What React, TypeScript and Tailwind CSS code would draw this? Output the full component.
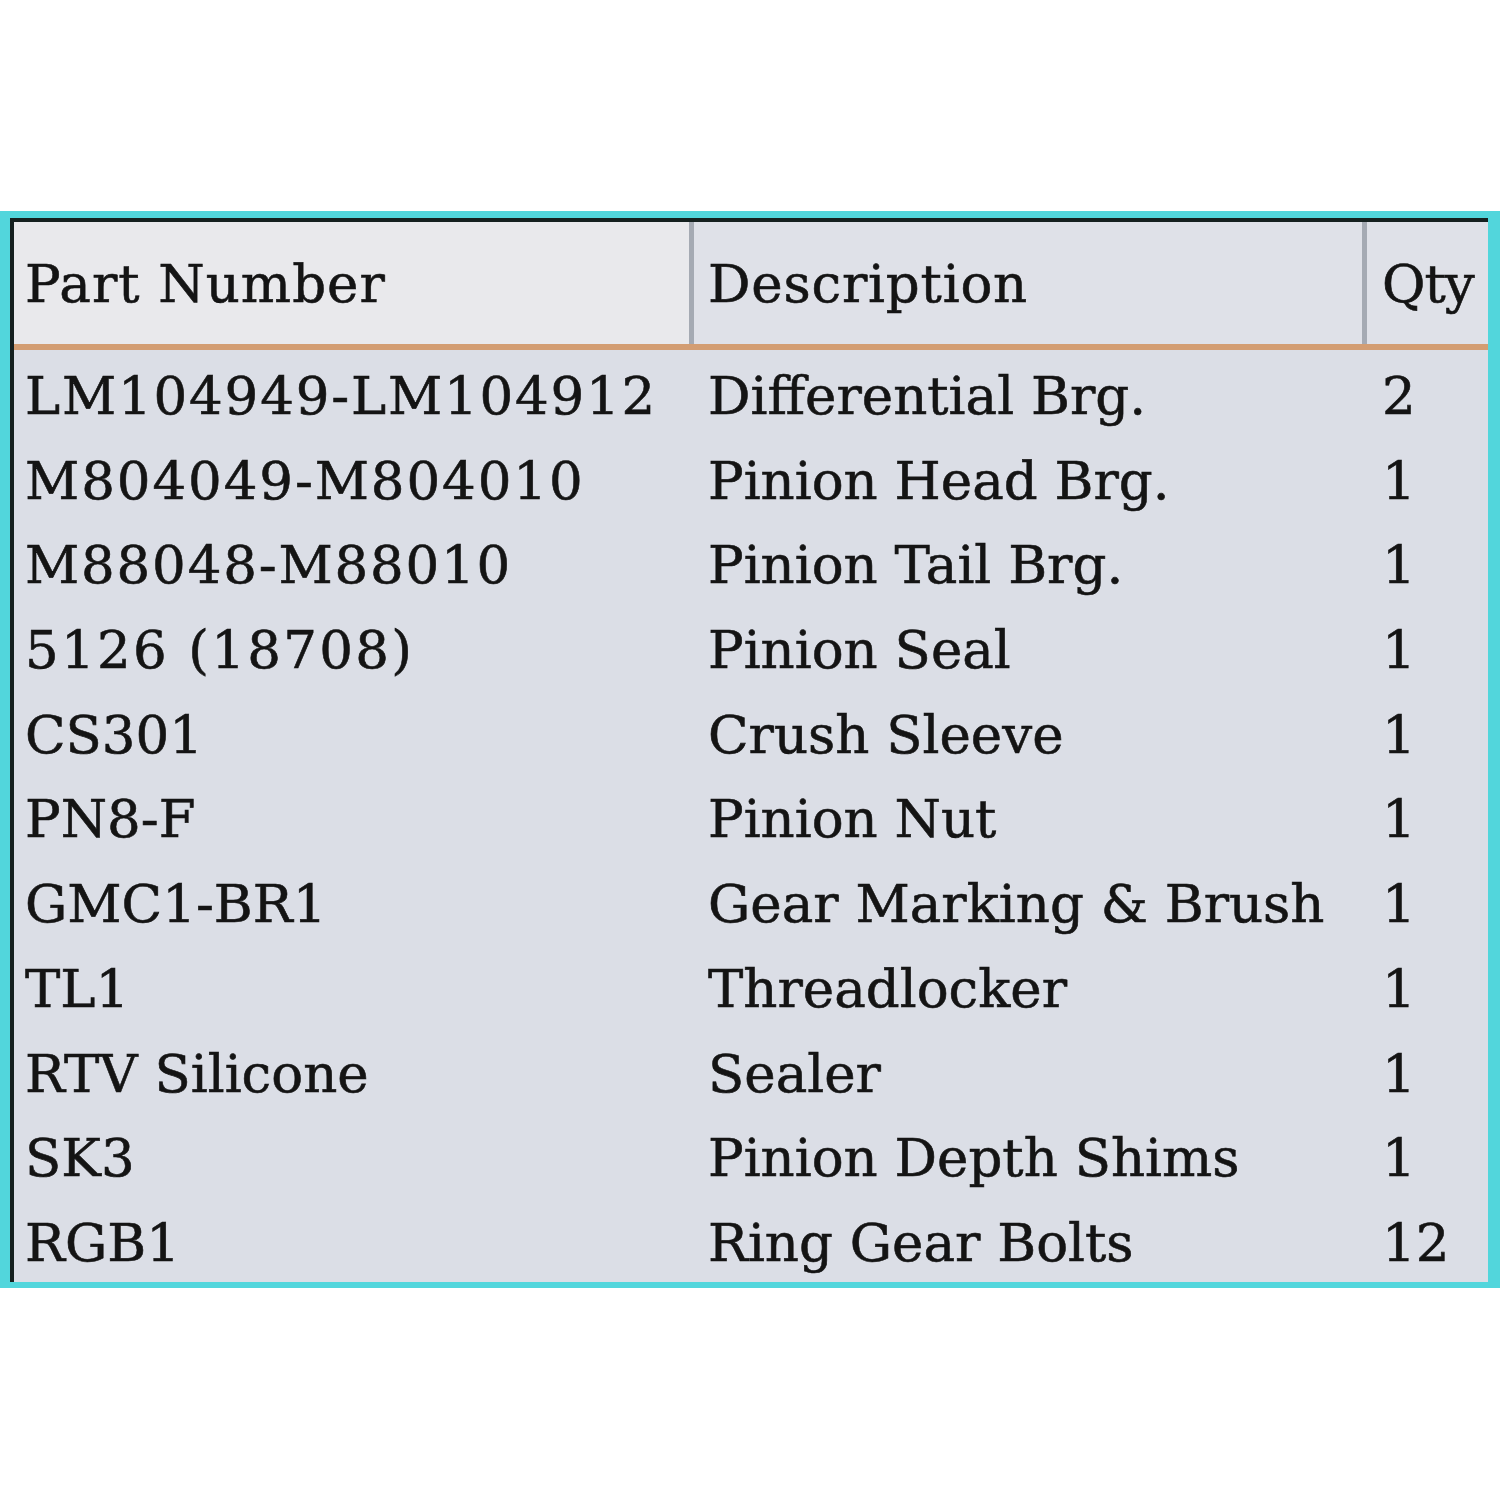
const rows: [string, string, string, string][] = [
  ["LM104949-LM104912", "Differential Brg.", "2", "tracking-[1.8px]"],
  ["M804049-M804010", "Pinion Head Brg.", "1", "tracking-[1.9px]"],
  ["M88048-M88010", "Pinion Tail Brg.", "1", "tracking-[1.8px]"],
  ["5126 (18708)", "Pinion Seal", "1", "tracking-[2.3px]"],
  ["CS301", "Crush Sleeve", "1", ""],
  ["PN8-F", "Pinion Nut", "1", ""],
  ["GMC1-BR1", "Gear Marking & Brush", "1", ""],
  ["TL1", "Threadlocker", "1", ""],
  ["RTV Silicone", "Sealer", "1", ""],
  ["SK3", "Pinion Depth Shims", "1", ""],
  ["RGB1", "Ring Gear Bolts", "12", ""],
];

export default function App() {
  return (
    <div className="h-[1500px] w-[1500px] bg-white pt-[211px] text-[#141414] [font-family:'DejaVu_Serif',serif] [-webkit-text-stroke:0.6px_#141414]">
      <div className="w-[1500px] border-t-[7px] border-r-[12px] border-b-[6px] border-l-[10px] border-[#52d6dc]">
        <div className="border-t-4 border-l-4 border-[#15201f] bg-[#dbdee6]">
          {/* header */}
          <div className="flex h-[128px] border-b-[6px] border-[#d39d72] text-[53px] leading-[122px]">
            <div className="w-[675px] bg-[#e9e9ec] pl-[11px] pt-[1px] tracking-[1px]">Part Number</div>
            <div className="w-[5px] bg-[#a5aab3]" />
            <div className="w-[668px] bg-[#dfe1e8] pl-[14px] pt-[1px] tracking-[0.8px]">Description</div>
            <div className="w-[5px] bg-[#a5aab3]" />
            <div className="flex-1 bg-[#dfe1e8] pl-[15px] pt-[1px] tracking-[-1px]">Qty</div>
          </div>
          {/* body */}
          <div className="flex flex-col">
            {rows.map(([part, desc, qty, track]) => (
              <div key={part} className="flex h-[84.7px] text-[53px] leading-[84.7px]">
                <div className={`w-[675px] whitespace-nowrap pl-[11px] pt-[4px] ${track}`}>{part}</div>
                <div className="w-[673px] whitespace-nowrap pl-[19px] pt-[4px]">{desc}</div>
                <div className="flex-1 whitespace-nowrap pl-[20px] pt-[4px]">{qty}</div>
              </div>
            ))}
          </div>
        </div>
      </div>
    </div>
  );
}
